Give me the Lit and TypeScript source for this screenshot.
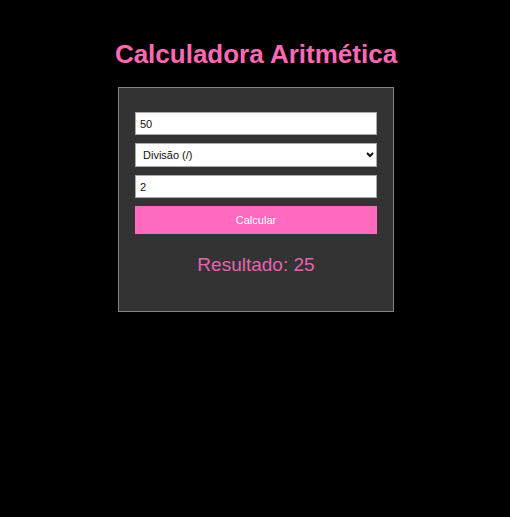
import { LitElement, html, css } from "lit";
import { customElement, state } from "lit/decorators.js";

type Operation = "add" | "subtract" | "multiply" | "divide";

const OPERATIONS: { id: Operation; label: string }[] = [
  { id: "add", label: "Adição (+)" },
  { id: "subtract", label: "Subtração (-)" },
  { id: "multiply", label: "Multiplicação (*)" },
  { id: "divide", label: "Divisão (/)" },
];

@customElement("app-root")
export class AppRoot extends LitElement {
  @state() private first = "50";
  @state() private second = "2";
  @state() private operation: Operation = "divide";
  @state() private result = "25";

  static styles = css`
    :host {
      display: block;
      box-sizing: border-box;
      min-height: 100vh;
      padding: 38px 16px 38px 18px;
      background: #000;
      color: #ff69b4;
      font-family: "Liberation Sans", Arial, sans-serif;
    }
    .title {
      margin: 0 0 17px;
      font-size: 26px;
      line-height: 32px;
      text-align: center;
    }
    .card {
      box-sizing: border-box;
      display: flex;
      flex-direction: column;
      gap: 8px;
      max-width: 276px;
      margin: 0 auto;
      padding: 24px 16px;
      border: 1px solid #858585;
      background: #333;
    }
    .field,
    .button {
      box-sizing: border-box;
      width: 100%;
      margin: 0;
      border-radius: 0;
      font-family: inherit;
      font-size: 11px;
    }
    .field {
      height: 23px;
      padding: 0 4px;
      border: 1px solid #aaa;
      background: #fff;
      color: #111;
    }
    .picker {
      position: relative;
      display: flex;
    }
    .select {
      appearance: none;
      height: 24px;
      padding: 0 20px 0 7px;
    }
    .chevron {
      position: absolute;
      right: 3px;
      top: 8px;
      width: 8px;
      height: 8px;
      fill: none;
      stroke: #111;
      stroke-width: 2;
      pointer-events: none;
    }
    .button {
      height: 28px;
      padding: 0;
      border: 0;
      background: #ff69bf;
      color: #fff;
      cursor: pointer;
    }
    .result {
      margin: 11px 0 10px;
      font-size: 19px;
      line-height: 24px;
      text-align: center;
      color: #e862b1;
    }
  `;

  private calculate(event: Event) {
    event.preventDefault();
    const a = Number(this.first);
    const b = Number(this.second);
    const results: Record<Operation, number> = {
      add: a + b,
      subtract: a - b,
      multiply: a * b,
      divide: a / b,
    };
    this.result = String(results[this.operation]);
  }

  render() {
    return html`
      <main>
        <h1 class="title">Calculadora Aritmética</h1>
        <form class="card" @submit=${this.calculate}>
          <input
            class="field"
            inputmode="decimal"
            aria-label="Primeiro número"
            .value=${this.first}
            @input=${(e: Event) => (this.first = (e.target as HTMLInputElement).value)}
          />
          <div class="picker">
            <select
              class="field select"
              aria-label="Operação"
              @change=${(e: Event) =>
                (this.operation = (e.target as HTMLSelectElement).value as Operation)}
            >
              ${OPERATIONS.map(
                (op) => html`<option value=${op.id} ?selected=${op.id === this.operation}>
                  ${op.label}
                </option>`
              )}
            </select>
            <svg class="chevron" viewBox="0 0 8 8" aria-hidden="true">
              <path d="M1 2 L4 5 L7 2" />
            </svg>
          </div>
          <input
            class="field"
            inputmode="decimal"
            aria-label="Segundo número"
            .value=${this.second}
            @input=${(e: Event) => (this.second = (e.target as HTMLInputElement).value)}
          />
          <button class="button" type="submit">Calcular</button>
          <p class="result" role="status">Resultado: ${this.result}</p>
        </form>
      </main>
    `;
  }
}
